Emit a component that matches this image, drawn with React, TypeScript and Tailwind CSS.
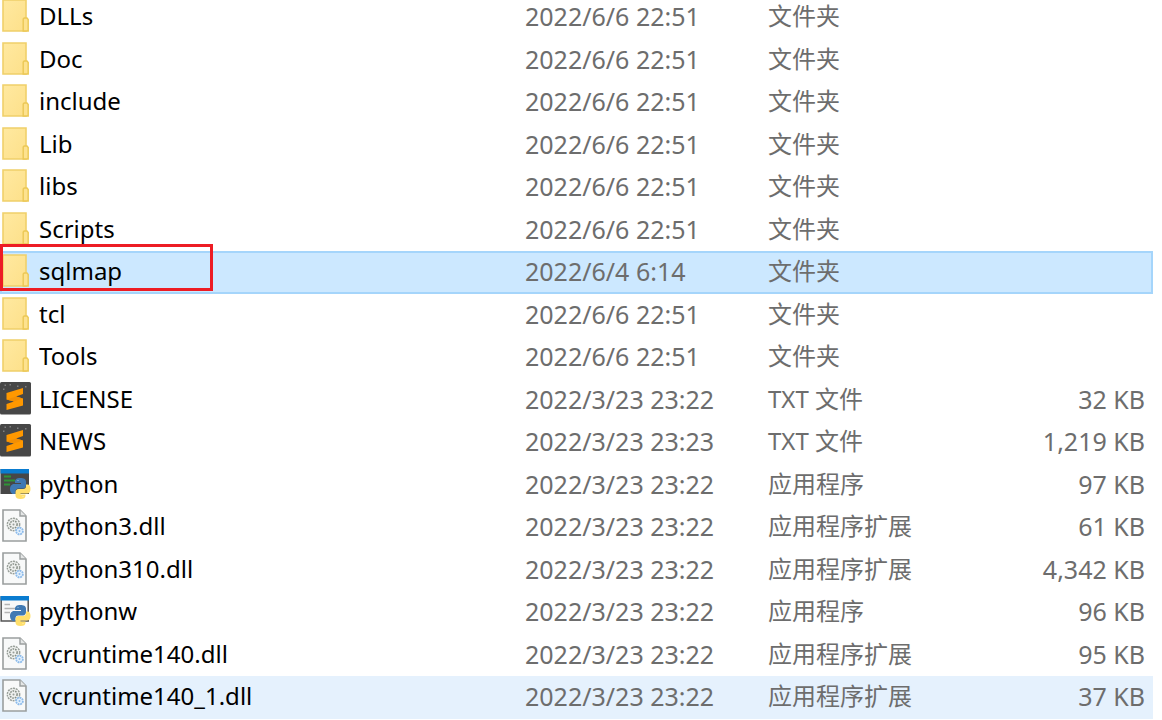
import clsx from "clsx";

type Kind = "folder" | "sublime" | "python" | "pythonw" | "dll";

interface Entry {
  kind: Kind;
  name: string;
  modified: string;
  type: string;
  size?: string;
  selected?: boolean;
  hovered?: boolean;
}

const entries: Entry[] = [
  { kind: "folder", name: "DLLs", modified: "2022/6/6 22:51", type: "文件夹" },
  { kind: "folder", name: "Doc", modified: "2022/6/6 22:51", type: "文件夹" },
  { kind: "folder", name: "include", modified: "2022/6/6 22:51", type: "文件夹" },
  { kind: "folder", name: "Lib", modified: "2022/6/6 22:51", type: "文件夹" },
  { kind: "folder", name: "libs", modified: "2022/6/6 22:51", type: "文件夹" },
  { kind: "folder", name: "Scripts", modified: "2022/6/6 22:51", type: "文件夹" },
  { kind: "folder", name: "sqlmap", modified: "2022/6/4 6:14", type: "文件夹", selected: true },
  { kind: "folder", name: "tcl", modified: "2022/6/6 22:51", type: "文件夹" },
  { kind: "folder", name: "Tools", modified: "2022/6/6 22:51", type: "文件夹" },
  { kind: "sublime", name: "LICENSE", modified: "2022/3/23 23:22", type: "TXT 文件", size: "32 KB" },
  { kind: "sublime", name: "NEWS", modified: "2022/3/23 23:23", type: "TXT 文件", size: "1,219 KB" },
  { kind: "python", name: "python", modified: "2022/3/23 23:22", type: "应用程序", size: "97 KB" },
  { kind: "dll", name: "python3.dll", modified: "2022/3/23 23:22", type: "应用程序扩展", size: "61 KB" },
  { kind: "dll", name: "python310.dll", modified: "2022/3/23 23:22", type: "应用程序扩展", size: "4,342 KB" },
  { kind: "pythonw", name: "pythonw", modified: "2022/3/23 23:22", type: "应用程序", size: "96 KB" },
  { kind: "dll", name: "vcruntime140.dll", modified: "2022/3/23 23:22", type: "应用程序扩展", size: "95 KB" },
  { kind: "dll", name: "vcruntime140_1.dll", modified: "2022/3/23 23:22", type: "应用程序扩展", size: "37 KB", hovered: true },
];

function FolderIcon() {
  return (
    <>
      <defs>
        <linearGradient id="folder" x1="0" y1="0" x2="1" y2="1">
          <stop offset="0" stopColor="#ffe9a0" />
          <stop offset="1" stopColor="#fde08a" />
        </linearGradient>
      </defs>
      <path d="M3 1H26V32H3Z" fill="url(#folder)" stroke="#f0d06a" strokeWidth="1.6" />
      <path d="M23.2 20L24.2 19H27L28.2 20.5V32H23.2Z" fill="#fde28f" stroke="#ebc855" strokeWidth="1.4" />
    </>
  );
}

function SublimeIcon() {
  return (
    <>
      <rect x="0" y="0" width="31" height="32.5" rx="1.5" fill="#474747" />
      <path d="M6.5 11L23 6V12L16 14.5L23 16.5V23.5L6.5 28V22L14 19.5L6.5 17.5Z" fill="#ff9800" />
      <path d="M16 14.500L23 16.500L14 19.500L6.500 17.500Z" fill="#f28f05" />
      <g fill="#808080">
        <rect x="3" y="6.5" width="1.5" height="1.5" />
        <rect x="4.5" y="2.5" width="1.5" height="1.5" />
        <rect x="9.5" y="2" width="1.5" height="1.5" />
        <rect x="17" y="3.5" width="1.5" height="1.5" />
        <rect x="25" y="4" width="1.5" height="1.5" />
      </g>
    </>
  );
}

function Snakes() {
  return (
    <>
      <path
        d="M20.5 11C16.5 11 15 12.5 15 15V16H21V17H14C11.5 17 10 19.5 10 22S11.5 27 13.5 27H15.5V24.5C15.5 22.5 16.5 21.5 18.5 21.5H23C25 21.500 26 19.500 26 18V14.500C26 12 23.500 11 20.500 11Z"
        fill="#3f79b3"
      />
      <path
        d="M20.5 32C24 32 25.5 31 25.5 28.5V27.5H20.5V26.5H27C29.5 26.5 30.5 24.5 30.5 22S29.5 17.5 27.5 17.5H26V19C26 21 25 22 23 22H18.5C16.5 22 15.5 23.5 15.5 25.5V28.5C15.5 31 17.5 32 20.5 32Z"
        fill="#ffdf6b"
      />
      <circle cx="18" cy="13.500" r="0.6" fill="#a9c4df" />
      <circle cx="23" cy="29.500" r="0.6" fill="#fff3bf" />
    </>
  );
}

function PythonIcon() {
  return (
    <>
      <rect x="0.5" y="2" width="28.5" height="25" fill="#474747" />
      <rect x="0.5" y="2" width="28.5" height="4.5" fill="#0a7cd0" />
      <path d="M4 9.5H11M4 13.5H15M4 17.5H10" stroke="#2f9436" strokeWidth="2" />
      <Snakes />
    </>
  );
}

function PythonwIcon() {
  return (
    <>
      <rect x="1.2" y="3" width="27" height="24" fill="#f8f8f8" stroke="#555" strokeWidth="1.5" />
      <rect x="0.5" y="2" width="28.5" height="4.5" fill="#0a7cd0" />
      <path d="M4.5 10.5H10M4.5 14.5H15M4.5 18.5H10" stroke="#b3b3b3" strokeWidth="1.5" />
      <Snakes />
    </>
  );
}

function DllIcon() {
  return (
    <>
      <path d="M3 1H20L26 7V32H3Z" fill="#f8f9f9" stroke="#9a9e9e" strokeWidth="1.6" />
      <path d="M20 1V7H26" fill="#e4e6e6" stroke="#9a9e9e" strokeWidth="1.4" />
      <circle cx="13.5" cy="15.5" r="6.2" fill="#eef0ee" stroke="#989e98" strokeWidth="1.4" strokeDasharray="2 0.8" />
      <circle cx="13.5" cy="15.5" r="3.6" fill="none" stroke="#858d85" strokeWidth="1.5" strokeDasharray="1.6 1" />
      <circle cx="13.5" cy="15.5" r="1" fill="#989e98" />
      <circle cx="19.5" cy="22" r="3.4" fill="#e3f0fc" stroke="#8dbbea" strokeWidth="1.8" strokeDasharray="1.9 0.7" />
      <circle cx="19.5" cy="22" r="1" fill="#8dbbea" />
    </>
  );
}

const icons = {
  folder: FolderIcon,
  sublime: SublimeIcon,
  python: PythonIcon,
  pythonw: PythonwIcon,
  dll: DllIcon,
};

function FileRow({ entry }: { entry: Entry }) {
  const Icon = icons[entry.kind];

  return (
    <tr
      className={clsx(
        "odd:h-[43px] even:h-[42px]",
        entry.selected && "bg-[#cce8ff] outline-2 -outline-offset-2 outline-[#a5d5fb]",
        entry.hovered && "bg-[#e5f1fd]"
      )}
    >
      <td className="relative p-0 pb-[3px] text-2xl leading-8 text-black">
        <div className="flex items-center gap-[7px]">
          <svg viewBox="0 0 32 34" className="h-[34px] w-8 shrink-0" aria-hidden="true">
            <Icon />
          </svg>
          <span className="truncate">{entry.name}</span>
        </div>
        {/* red highlight around the selected folder */}
        {entry.selected && (
          <div className="absolute -top-[7px] left-0 h-[47px] w-[213px] border-3 border-[#ed1c24]" />
        )}
      </td>
      <td className="p-0 pb-[3px] text-[25px] leading-8">{entry.modified}</td>
      <td className="p-0 pb-[3px] text-2xl leading-8">{entry.type}</td>
      <td className="p-0 pr-2 pb-[3px] text-right text-[25px] leading-8">{entry.size}</td>
    </tr>
  );
}

export default function App() {
  return (
    <main className="h-screen overflow-hidden bg-white pr-[9px] font-['Noto_Sans','Noto_Sans_CJK_SC',sans-serif] text-[#6d6d6d]">
      {/* list is scrolled a few pixels past the first row */}
      <table className="-mt-1 w-full table-fixed border-collapse whitespace-nowrap">
        <colgroup>
          <col className="w-[525px]" />
          <col className="w-[243px]" />
          <col />
          <col className="w-[140px]" />
        </colgroup>
        <tbody>
          {entries.map((entry) => (
            <FileRow key={entry.name} entry={entry} />
          ))}
        </tbody>
      </table>
    </main>
  );
}
